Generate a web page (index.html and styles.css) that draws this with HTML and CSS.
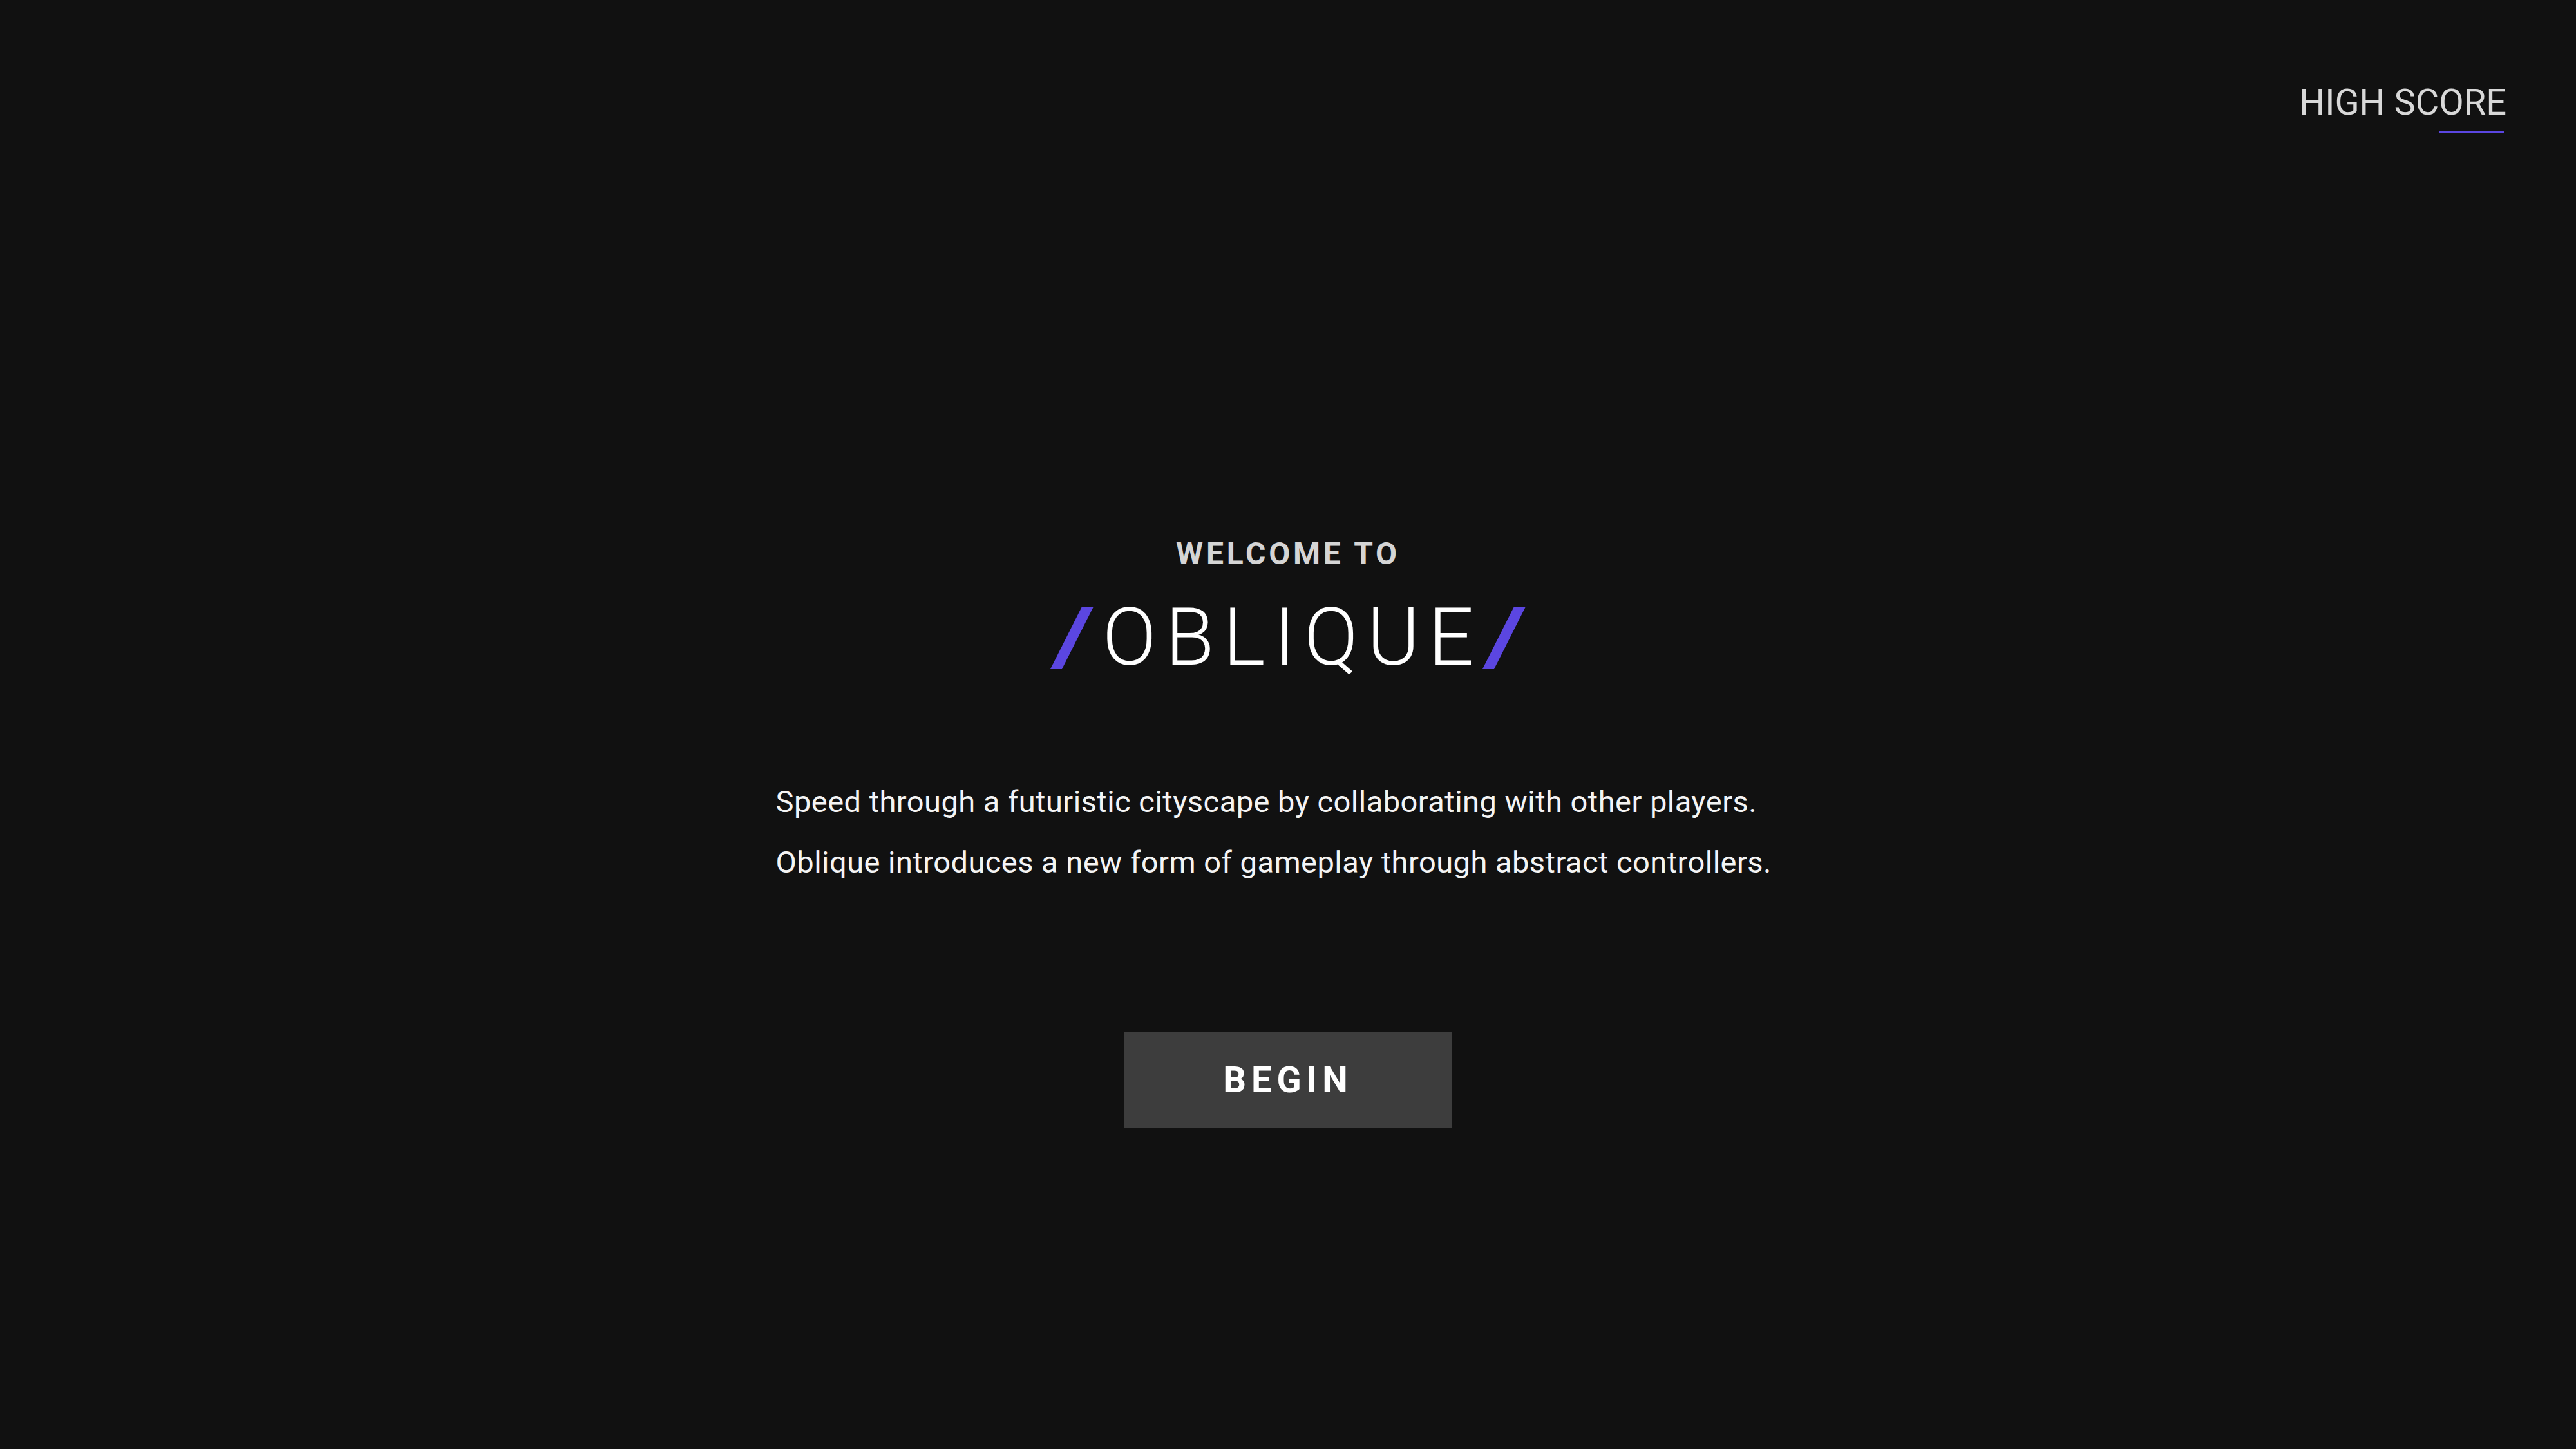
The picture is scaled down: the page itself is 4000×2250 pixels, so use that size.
FILE: index.html
```html
<!DOCTYPE html>
<html lang="en">
<head>
<meta charset="utf-8">
<title>Oblique</title>
<link rel="stylesheet" href="styles.css">
</head>
<body>
<header class="topbar">
  <a class="score-link" href="#">
    <span class="score-text">HIGH SCORE</span>
    <span class="score-underline"></span>
  </a>
</header>
<main class="intro">
  <h2 class="welcome">WELCOME TO</h2>
  <h1 class="title">
    <svg class="slash slash-left" width="67" height="97" viewBox="0 0 67 97" aria-hidden="true"><polygon points="49,0 67,0 18,97 0,97"/></svg>
    <span class="title-text">OBLIQUE</span>
    <svg class="slash slash-right" width="67" height="97" viewBox="0 0 67 97" aria-hidden="true"><polygon points="49,0 67,0 18,97 0,97"/></svg>
  </h1>
  <div class="description">
    <p class="desc-line">Speed through a futuristic cityscape by collaborating with other players.</p>
    <p class="desc-line">Oblique introduces a new form of gameplay through abstract controllers.</p>
  </div>
  <button class="begin" type="button">BEGIN</button>
</main>
</body>
</html>
```

FILE: styles.css
```css
html, body {
  margin: 0;
  padding: 0;
  background: #111111;
}

body {
  font-family: Roboto, "Liberation Sans", sans-serif;
  color: #ffffff;
  min-height: 2250px;
}

.topbar {
  display: flex;
  justify-content: flex-end;
  padding: 131px 108px 0 0;
}

.score-link {
  display: flex;
  flex-direction: column;
  align-items: flex-end;
  gap: 16px;
  text-decoration: none;
}

.score-text {
  font-size: 56px;
  line-height: 1;
  font-weight: 400;
  color: #d8d8d8;
}

.score-underline {
  display: block;
  width: 100px;
  height: 4px;
  margin-right: 4px;
  background: #5b46e1;
}

.intro {
  display: flex;
  flex-direction: column;
  align-items: center;
  padding-top: 629px;
}

.welcome {
  margin: 0;
  font-size: 48px;
  line-height: 1;
  font-weight: 700;
  letter-spacing: 4.8px;
  color: #d5d5d5;
}

.title {
  margin: 44px 0 0 0;
  display: flex;
  align-items: center;
  font-size: 124px;
  line-height: 1;
  font-weight: 300;
}

.title-text {
  letter-spacing: 13.7px;
  color: #ffffff;
  margin-left: 14px;
}

.slash {
  display: block;
  fill: #5b46e1;
}

.description {
  margin-top: 146px;
  width: 1591px;
}

.desc-line {
  margin: 0;
  font-size: 47px;
  line-height: 94px;
  font-weight: 400;
  letter-spacing: 0.47px;
  color: #f4f4f4;
  text-align: left;
  white-space: nowrap;
}

.begin {
  margin-top: 217px;
  width: 508px;
  height: 148px;
  border: none;
  background: #3d3d3d;
  color: #ffffff;
  font-family: Roboto, "Liberation Sans", sans-serif;
  font-size: 56px;
  line-height: 1;
  font-weight: 700;
  letter-spacing: 8px;
  display: flex;
  align-items: center;
  justify-content: center;
  padding: 0;
  cursor: pointer;
}
```
